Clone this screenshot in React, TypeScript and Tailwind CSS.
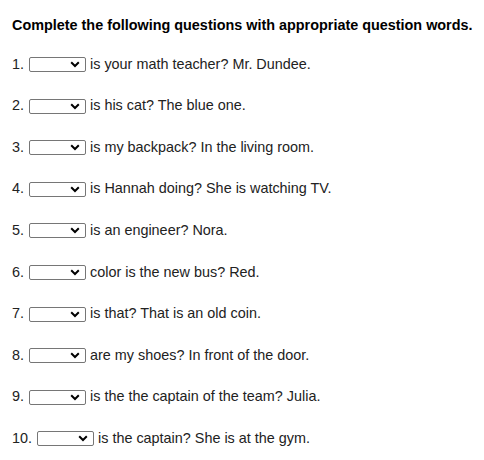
const questions = [
  'is your math teacher? Mr. Dundee.',
  'is his cat? The blue one.',
  'is my backpack? In the living room.',
  'is Hannah doing? She is watching TV.',
  'is an engineer? Nora.',
  'color is the new bus? Red.',
  'is that? That is an old coin.',
  'are my shoes? In front of the door.',
  'is the the captain of the team? Julia.',
  'is the captain? She is at the gym.',
];

const Dropdown = () => (
  <span className="inline-flex items-center justify-end w-[57px] h-[15px] border border-[#767676] rounded-[2px] bg-white pr-[5px] ml-[5px] mr-[4px]">
    <svg width="10" height="7" viewBox="0 0 10 7">
      <path d="M1.2 1.3 L5 5 L8.8 1.3" fill="none" stroke="#000" strokeWidth="2" />
    </svg>
  </span>
);

export default function App() {
  return (
    <div className="w-[484px] h-[460px] bg-white pl-[12px] pt-[16px] font-['Liberation_Sans',Arial,sans-serif] text-[14.4px] text-[#222]">
      <h1 className="font-bold text-[14.4px] text-black leading-[18px]">
        Complete the following questions with appropriate question words.
      </h1>
      <div className="flex flex-col mt-[22px] gap-[24.6px]">
        {questions.map((q, i) => (
          <div key={i} className="flex items-center h-[17px]">
            <span>{i + 1}.</span>
            <Dropdown />
            <span>{q}</span>
          </div>
        ))}
      </div>
    </div>
  );
}
